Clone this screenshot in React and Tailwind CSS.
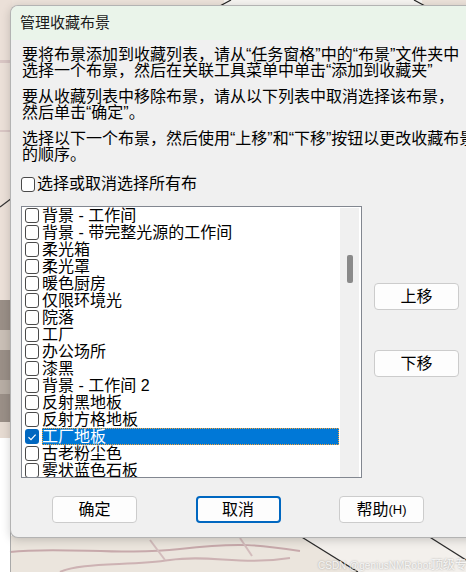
import React from "react";

const items = [
  "背景 - 工作间",
  "背景 - 带完整光源的工作间",
  "柔光箱",
  "柔光罩",
  "暖色厨房",
  "仅限环境光",
  "院落",
  "工厂",
  "办公场所",
  "漆黑",
  "背景 - 工作间 2",
  "反射黑地板",
  "反射方格地板",
  "工厂地板",
  "古老粉尘色",
  "雾状蓝色石板",
];

function Check({ checked }) {
  if (checked) {
    return (
      <span className="w-[14px] h-[15px] rounded-[3px] bg-[#0067c0] flex items-center justify-center shrink-0">
        <svg width="10" height="8" viewBox="0 0 10 8">
          <path d="M1.5 4.3 L4 6.6 L8.6 1.6" stroke="#fff" strokeWidth="1.2" fill="none" />
        </svg>
      </span>
    );
  }
  return <span className="w-[14px] h-[15px] rounded-[3px] border border-[#4a4a4a] bg-white shrink-0" />;
}

function Backdrop() {
  return (
    <svg className="absolute inset-0" width="466" height="572" viewBox="0 0 466 572">
      <rect width="466" height="572" fill="#f6f4f1" />
      {/* top band */}
      <rect x="0" y="0" width="224" height="8" fill="#ece2da" />
      <rect x="422" y="0" width="44" height="8" fill="#ece2da" />
      <line x1="231" y1="0" x2="218" y2="7" stroke="#222" strokeWidth="1.2" />
      <line x1="414" y1="0" x2="427" y2="7" stroke="#222" strokeWidth="1.2" />
      {/* left band */}
      <rect x="0" y="0" width="12" height="300" fill="#ebe0d8" />
      <rect x="0" y="60" width="12" height="3" fill="#d9c6c4" />
      <rect x="0" y="130" width="12" height="2" fill="#d9c6c4" />
      <line x1="0" y1="207" x2="12" y2="198" stroke="#333" strokeWidth="1.2" />
      <rect x="0" y="300" width="12" height="122" fill="#9a8f87" />
      <rect x="0" y="330" width="12" height="20" fill="#c9bfb6" />
      <rect x="0" y="380" width="12" height="14" fill="#b7ada4" />
      <rect x="0" y="422" width="12" height="16" fill="#e6dbd2" />
      <rect x="0" y="438" width="12" height="134" fill="#ffffff" />
      {/* bottom floor */}
      <rect x="10" y="536" width="456" height="36" fill="#ebe5dd" />
      <path d="M10 552 C 60 546, 120 556, 180 549 S 260 545, 300 551" stroke="#c7a9ab" strokeWidth="2" fill="none" />
      <path d="M60 572 C 80 562, 130 566, 170 560 S 240 566, 290 558" stroke="#cdb2b3" strokeWidth="2" fill="none" />
      <path d="M150 540 L165 560" stroke="#d3bcbc" strokeWidth="2" />
      <path d="M240 538 L252 556" stroke="#d3bcbc" strokeWidth="2" />
      <polygon points="300,536 466,536 466,572 356,572" fill="#f3f0ec" />
      <line x1="300" y1="536" x2="358" y2="572" stroke="#2b2b2b" strokeWidth="1.3" />
      <line x1="428" y1="536" x2="466" y2="560" stroke="#2b2b2b" strokeWidth="1.3" />
      <line x1="10.5" y1="438" x2="10.5" y2="572" stroke="#a9a9a9" />
    </svg>
  );
}

function Btn({ children, focus }) {
  return (
    <button
      className={
        "w-[85px] h-[27px] rounded-[4px] bg-[#fdfdfd] text-[16px] text-black flex items-center justify-center leading-none " +
        (focus ? "border-2 border-[#0067c0]" : "border border-[#cccccc]")
      }
    >
      {children}
    </button>
  );
}

export default function App() {
  return (
    <div className="relative w-[466px] h-[572px] overflow-hidden pt-[5px] pl-[10px] font-['Liberation_Sans','Noto_Sans_CJK_SC',sans-serif] text-black">
      <Backdrop />

      {/* dialog */}
      <div className="relative w-[470px] h-[533px] flex flex-col rounded-l-[8px] border border-r-0 border-[#b3b3b3] overflow-hidden bg-[#f0f0f0] shadow-[0_2px_10px_rgba(0,0,0,0.18)]">
        <div className="h-[34px] shrink-0 bg-[#eaf4ea] flex items-center pl-[9px] text-[15px] text-[#1b1b1b]">
          管理收藏布景
        </div>

        <div className="flex-1 flex flex-col pl-[10px] pt-[7px]">
          <div className="pl-[1px] text-[16px] leading-[16px] whitespace-nowrap">
            <div>要将布景添加到收藏列表，请从“任务窗格”中的“布景”文件夹中</div>
            <div>选择一个布景，然后在关联工具菜单中单击“添加到收藏夹”</div>
          </div>
          <div className="pl-[1px] mt-[10px] text-[16px] leading-[16px] whitespace-nowrap">
            <div>要从收藏列表中移除布景，请从以下列表中取消选择该布景，</div>
            <div>然后单击“确定”。</div>
          </div>
          <div className="pl-[1px] mt-[10px] text-[16px] leading-[16px] whitespace-nowrap">
            <div>选择以下一个布景，然后使用“上移”和“下移”按钮以更改收藏布景</div>
            <div>的顺序。</div>
          </div>

          <div className="mt-[13px] h-[16px] flex items-center gap-[2px] text-[16px] leading-[16px]">
            <Check />
            <span>选择或取消选择所有布</span>
          </div>

          <div className="mt-[14px] flex">
            {/* list box */}
            <div className="w-[341px] h-[272px] border border-[#828790] bg-white flex overflow-hidden">
              <div className="flex-1 flex flex-col text-[16px] leading-[17px] whitespace-nowrap">
                {items.map((it) => {
                  const sel = it === "工厂地板";
                  return (
                    <div key={it} className="h-[17px] shrink-0 flex items-center pl-[3px]">
                      <Check checked={sel} />
                      <span
                        className={
                          "ml-[3px] h-[17px] flex items-center " +
                          (sel
                            ? "flex-1 mr-[1px] bg-[#0078d7] text-white outline-1 outline-dotted outline-[#f5a33a] -outline-offset-1"
                            : "")
                        }
                      >
                        {it}
                      </span>
                    </div>
                  );
                })}
              </div>
              <div className="w-[19px] mt-[1px] bg-[#f0f0f0] pt-[47px] shrink-0">
                <div className="ml-[7px] w-[6px] h-[28px] rounded-[2px] bg-[#8a8a8a]" />
              </div>
              <div className="w-[2px] shrink-0" />
            </div>

            {/* side buttons */}
            <div className="ml-[12px] pt-[77px] flex flex-col gap-[40px]">
              <Btn>上移</Btn>
              <Btn>下移</Btn>
            </div>
          </div>

          <div className="mt-[18px] pl-[31px] flex gap-[58.5px]">
            <Btn>确定</Btn>
            <Btn focus>取消</Btn>
            <Btn>
              帮助<span className="text-[13px]">(H)</span>
            </Btn>
          </div>
        </div>
      </div>

      {/* watermark */}
      <div className="absolute left-[318px] top-[552px] whitespace-nowrap text-[rgba(255,255,255,0.85)] [text-shadow:0_0_2px_rgba(0,0,0,0.35)]">
        <span className="text-[10px]">CSDN @geniusNMRobot</span>
        <span className="text-[12px]">顶级专家</span>
      </div>
    </div>
  );
}
